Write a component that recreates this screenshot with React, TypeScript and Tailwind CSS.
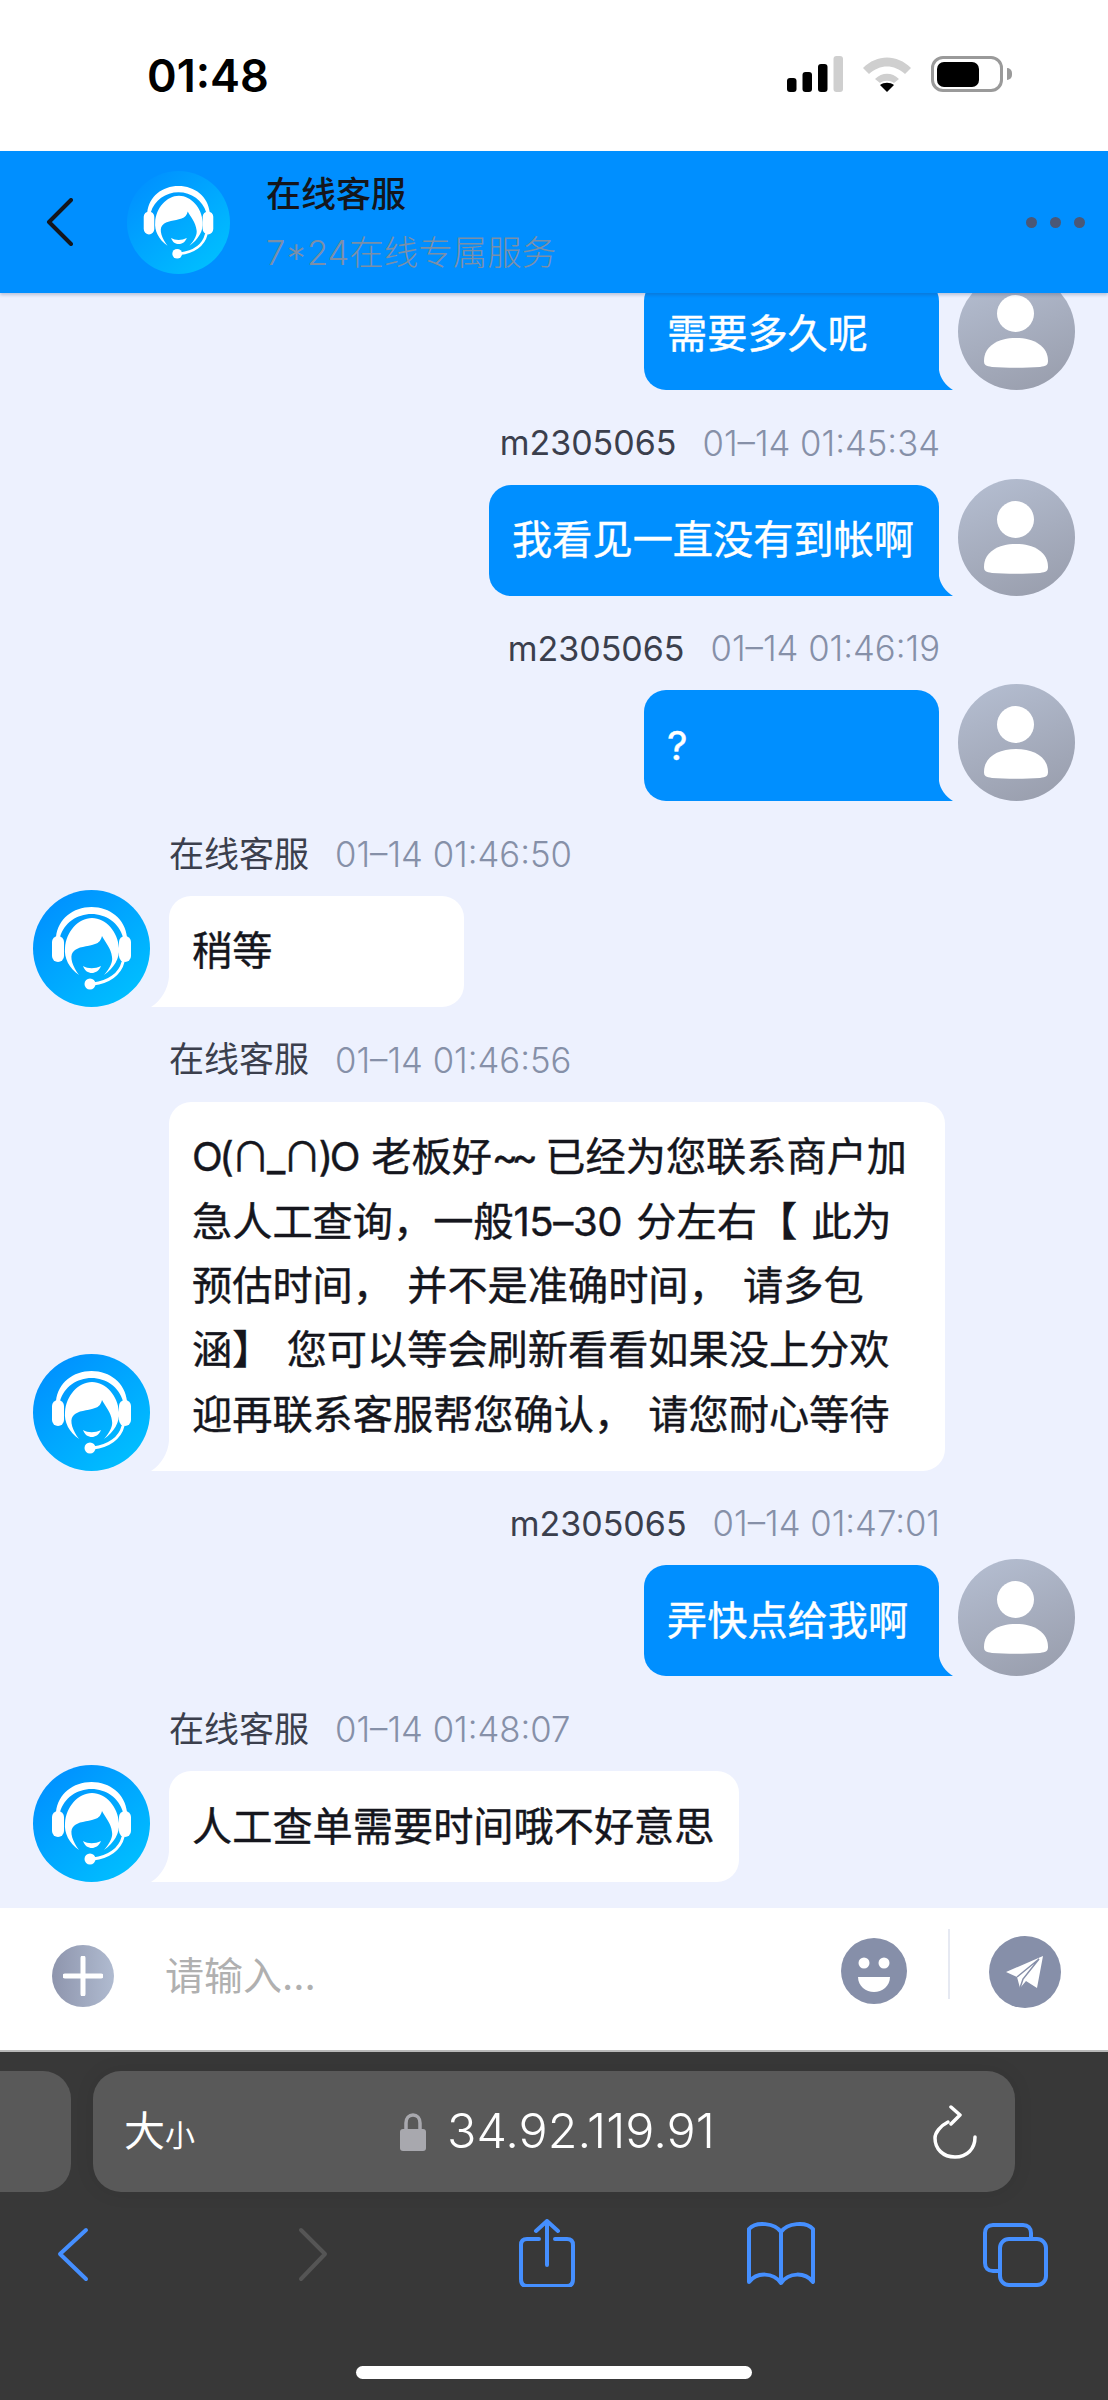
import type { ReactNode } from "react";

const cjk = "font-['Inter','Noto_Sans_CJK_SC',sans-serif]";

function AgentAvatar({ className }: { className: string }) {
  return (
    <svg viewBox="0 0 117 117" className={className}>
      <defs>
        <linearGradient id="agentBg" x1="0.15" y1="0.1" x2="0.85" y2="0.9">
          <stop offset="0" stopColor="#0092ff" />
          <stop offset="1" stopColor="#00beff" />
        </linearGradient>
      </defs>
      <circle cx="58.5" cy="58.5" r="58.5" fill="url(#agentBg)" />
      {/* headband */}
      <path d="M23 47C25 29 40 17 58.500 17C77 17 92 29 94 47L90 47C86 33 73 24 58.500 24C44 24 31 33 27 47Z" fill="#fff" />
      {/* ear cups */}
      <rect x="19" y="46" width="12" height="26" rx="6" fill="#fff" />
      <rect x="86" y="46" width="12" height="26" rx="6" fill="#fff" />
      {/* hair, the face is the notch left open */}
      <path d="M46 85C36 78 31 68 32 58C33 42 45 28 59 28C73 28 85 42 86 58C87 68 81 78 71 85C77 78 80 72 79 67C78 58 72 52 69 46C68 50 66 53 62 54C54 57 45 56 40 62C36 67 40 77 46 85Z" fill="#fff" />
      {/* smile */}
      <path d="M50 76C55 79 62 79 68 76C66 81 62 83 59 83C55 83 52 81 50 76Z" fill="#fff" />
      {/* microphone arm */}
      <path d="M90 72C87 84 76 92 60 94" fill="none" stroke="#fff" strokeWidth="3" strokeLinecap="round" />
      <circle cx="57" cy="94" r="5.500" fill="#fff" />
    </svg>
  );
}

function UserAvatar() {
  return (
    <svg viewBox="0 0 117 117" className="h-[117px] w-[117px] shrink-0">
      <defs>
        <linearGradient id="userBg" x1="0.3" y1="0" x2="0.7" y2="1">
          <stop offset="0" stopColor="#b3bccf" />
          <stop offset="1" stopColor="#9a9fae" />
        </linearGradient>
      </defs>
      <circle cx="58.5" cy="58.500" r="58.5" fill="url(#userBg)" />
      <circle cx="57.500" cy="40.500" r="18.500" fill="#fff" />
      <path d="M26 88C26 73 40 65 58 65C76 65 90 73 90 88C90 92 88 93 82 94C68 95 48 95 34 94C28 93 26 92 26 88Z" fill="#fff" />
    </svg>
  );
}

function Meta({ name, time, right }: { name: string; time: string; right?: boolean }) {
  return (
    <div className={`mb-[15px] flex h-[42px] items-center ${right ? "justify-end gap-[26px] pr-[168px]" : "gap-[26px] pl-[169px]"}`}>
      <span className={`text-[#3b3f4d] ${right ? "text-[34px]" : "text-[35px]"}`}>{name}</span>
      <span className="text-[34.700px] font-light text-[#8690a8]">{time}</span>
    </div>
  );
}

function OutMessage({ name, time, children }: { name?: string; time?: string; children: ReactNode }) {
  return (
    <div>
      {name && time && <Meta name={name} time={time} right />}
      <div className="flex items-end justify-end gap-[19px] pr-[33px]">
        <div className="relative min-w-[295px] rounded-[22px] rounded-br-none bg-[#008fff] py-[23.500px] pl-[23px] pr-[25px] text-[40.200px] leading-[64px] text-white [-webkit-text-stroke:0.4px_#fff]">
          {children}
          <svg viewBox="0 0 14 20" className="absolute bottom-0 right-[-14px] h-[20px] w-[14px]">
            <path d="M0 0C1 8 7 16 14 20L0 20Z" fill="#008fff" />
          </svg>
        </div>
        <UserAvatar />
      </div>
    </div>
  );
}

function InMessage({ time, wide, children }: { time: string; wide?: boolean; children: ReactNode }) {
  return (
    <div>
      <Meta name="在线客服" time={time} />
      <div className="flex items-end gap-[19px] pl-[33px]">
        <AgentAvatar className="h-[117px] w-[117px] shrink-0" />
        <div className={`relative rounded-[22px] rounded-bl-none bg-white py-[23.500px] pl-[23px] pr-[25px] text-[40.200px] text-[#15161d] [-webkit-text-stroke:0.4px_#15161d] ${wide ? "mt-[6px] w-[776px] whitespace-nowrap leading-[64.400px] [word-spacing:3px]" : "min-w-[295px] leading-[64px]"}`}>
          {children}
          <svg viewBox="0 0 18 30" className="absolute bottom-0 left-[-18px] h-[30px] w-[18px]">
            <path d="M18 0C17 12 10 24 0 30L18 30Z" fill="#fff" />
          </svg>
        </div>
      </div>
    </div>
  );
}

function StatusIcons() {
  return (
    <div className="flex items-center">
      <svg viewBox="0 0 56 36" className="h-[36px] w-[56px]">
        <rect x="0" y="22" width="9.500" height="14" rx="3" fill="#000" />
        <rect x="15.500" y="16" width="9.500" height="20" rx="3" fill="#000" />
        <rect x="31" y="8" width="9.500" height="28" rx="3" fill="#000" />
        <rect x="46.500" y="0" width="9.500" height="36" rx="3" fill="#cfcfcf" />
      </svg>
      <svg viewBox="0 0 48 36" className="ml-[20px] h-[36px] w-[48px]">
        <path d="M0 12C14-2 34-2 48 12L42 18C31 8 17 8 6 18Z" fill="#cfcfcf" />
        <path d="M12 23C19 16 29 16 36 23L31 27C27 24 21 24 17 27Z" fill="#cfcfcf" />
        <path d="M17 29C21 26 27 26 31 29L24 36Z" fill="#000" />
      </svg>
      <div className="ml-[20px] flex h-[36px] w-[72px] items-center rounded-[12px] border-[3px] border-[#9a9a9a] p-[3px]">
        <div className="h-[25px] w-[42px] rounded-[7px] bg-black" />
      </div>
      <div className="ml-[4px] h-[12px] w-[5px] rounded-r-full bg-[#9a9a9a]" />
    </div>
  );
}

function ChatHeader() {
  return (
    <header className="relative z-10 flex h-[142px] shrink-0 items-center bg-[#008fff] pl-[46px] pr-[23px] shadow-[0_2px_3px_rgba(40,60,110,0.25)]">
      <svg viewBox="0 0 27 48" className="h-[48px] w-[27px]">
        <path d="M25 2L3 24L25 46" fill="none" stroke="#14161c" strokeWidth="4" strokeLinecap="round" strokeLinejoin="round" />
      </svg>
      <AgentAvatar className="ml-[54px] h-[103px] w-[103px]" />
      <div className="ml-[36px] flex flex-col pt-[3px]">
        <span className="text-[35px] font-medium leading-[44px] text-[#14161c]">在线客服</span>
        <span className="mt-[15px] text-[34.500px] font-light leading-[44px] text-[#7b8fa8]">7*24在线专属服务</span>
      </div>
      <div className="ml-auto flex gap-[13px]">
        <span className="h-[11px] w-[11px] rounded-full bg-[#4a5877]" />
        <span className="h-[11px] w-[11px] rounded-full bg-[#4a5877]" />
        <span className="h-[11px] w-[11px] rounded-full bg-[#4a5877]" />
      </div>
    </header>
  );
}

function InputBar() {
  return (
    <div className="flex h-[142px] shrink-0 items-start bg-white pl-[52px] pr-[47px]">
      <div className="mt-[37px] flex h-[62px] w-[62px] items-center justify-center rounded-full bg-gradient-to-l from-[#b0bbd0] to-[#8e95ad]">
        <svg viewBox="0 0 40 40" className="h-[40px] w-[40px]">
          <path d="M20 2V38M2 20H38" stroke="#fff" strokeWidth="5" strokeLinecap="round" />
        </svg>
      </div>
      <span className="ml-[51px] mt-[39px] text-[39px] leading-[58px] text-[#b0b0b0]">请输入...</span>
      <svg viewBox="0 0 66 66" className="ml-auto mt-[30px] h-[66px] w-[66px]">
        <circle cx="33" cy="33" r="33" fill="#868fa9" />
        <circle cx="23" cy="25" r="5.500" fill="#fff" />
        <circle cx="43" cy="25" r="5.500" fill="#fff" />
        <path d="M17 39H49C49 48 41 54 33 54C25 54 17 48 17 39Z" fill="#fff" />
      </svg>
      <div className="ml-[41px] mt-[21px] h-[70px] w-[2px] bg-[#e6e9f2]" />
      <svg viewBox="0 0 72 72" className="ml-[39px] mt-[28px] h-[72px] w-[72px]">
        <circle cx="36" cy="36" r="36" fill="#868fa9" />
        <path d="M54 20L17 36L28 41L31 52L37 45L48 52Z" fill="#fff" />
        <path d="M28 41L50 23L34 43L31 52" fill="none" stroke="#868fa9" strokeWidth="1.500" />
      </svg>
    </div>
  );
}

function BrowserChrome() {
  const blue = "#458fff";
  return (
    <div className="flex h-[350px] shrink-0 flex-col border-t-2 border-[#b8b8b8] bg-[#383838]">
      <div className="mt-[19px] flex h-[121px] items-stretch gap-[22px]">
        <div className="w-[71px] rounded-r-[28px] bg-[#595959]" />
        <div className="flex w-[922px] items-center rounded-[28px] bg-[#595959] pl-[31px] pr-[38px] shadow-[0_0_20px_rgba(0,0,0,0.08)]">
          <span className="flex w-[276px] items-baseline text-white">
            <span className="text-[41px]">大</span>
            <span className="text-[30px]">小</span>
          </span>
          <svg viewBox="0 0 26 38" className="h-[38px] w-[26px]">
            <path d="M6 17V10C6 5 9 2 13 2C17 2 20 5 20 10V17" fill="none" stroke="#a8a8ae" strokeWidth="3.500" />
            <rect x="0" y="16" width="26" height="22" rx="3" fill="#a8a8ae" />
          </svg>
          <span className="ml-[21px] text-[48.500px] font-light leading-none text-white">34.92.119.91</span>
          <svg viewBox="0 0 44 54" className="ml-auto h-[54px] w-[44px]">
            <path d="M15 17C7 21 2 28 2 33C2 44 10 52 22 52C34 52 42 44 42 32" fill="none" stroke="#fff" strokeWidth="3.500" strokeLinecap="round" />
            <path d="M18 2L27 10L18 19" fill="none" stroke="#fff" strokeWidth="3.500" strokeLinecap="round" strokeLinejoin="round" />
          </svg>
        </div>
      </div>
      <div className="mt-[26px] flex h-[69px] items-center justify-between pl-[38px] pr-[59px]">
        <svg viewBox="0 0 68 68" className="h-[68px] w-[68px]">
          <path d="M48 11L22 35L48 60" fill="none" stroke={blue} strokeWidth="4" strokeLinecap="round" strokeLinejoin="round" />
        </svg>
        <svg viewBox="0 0 68 68" className="h-[68px] w-[68px]">
          <path d="M27 11L51 35L27 60" fill="none" stroke="#555" strokeWidth="4" strokeLinecap="round" strokeLinejoin="round" />
        </svg>
        <svg viewBox="0 0 68 68" className="h-[68px] w-[68px]">
          <path d="M29 20H17C13 20 11 22 11 26V60C11 65 13 67 17 67H57C61 67 63 65 63 60V26C63 22 61 20 57 20H45M37 46V2M26 12L37 2L48 12" fill="none" stroke={blue} strokeWidth="4" strokeLinecap="round" strokeLinejoin="round" />
        </svg>
        <svg viewBox="0 0 68 68" className="h-[68px] w-[68px] overflow-visible">
          <path d="M36 13C30 4 11 2 4 10V63C12 53 28 53 36 64C44 53 60 53 68 63V10C61 2 42 4 36 13V64" fill="none" stroke={blue} strokeWidth="4" strokeLinecap="round" strokeLinejoin="round" />
        </svg>
        <svg viewBox="0 0 68 68" className="h-[68px] w-[68px]">
          <path d="M19 52H12C7 52 4 49 4 44V14C4 9 7 6 12 6H42C47 6 50 9 50 14V20" fill="none" stroke={blue} strokeWidth="4" />
          <rect x="19" y="20" width="46" height="46" rx="9" fill="none" stroke={blue} strokeWidth="4" />
        </svg>
      </div>
      <div className="mt-auto mb-[21px] h-[13px] w-[396px] self-center rounded-full bg-white" />
    </div>
  );
}

export default function App() {
  return (
    <div className={`flex h-[2400px] w-[1108px] flex-col overflow-hidden bg-white ${cjk}`}>
      <div className="flex h-[151px] shrink-0 items-start justify-between pl-[147px] pr-[96px] pt-[56px]">
        <span className="mt-[1px] text-[45px] font-semibold leading-[37px] text-black">01:48</span>
        <StatusIcons />
      </div>
      <ChatHeader />
      <main className="flex min-h-0 flex-1 flex-col justify-end gap-[31.700px] overflow-hidden bg-[#edf1fe] pb-[26px]">
        <OutMessage>需要多久呢</OutMessage>
        <OutMessage name="m2305065" time="01–14 01:45:34">我看见一直没有到帐啊</OutMessage>
        <OutMessage name="m2305065" time="01–14 01:46:19">?</OutMessage>
        <InMessage time="01–14 01:46:50">稍等</InMessage>
        <InMessage time="01–14 01:46:56" wide>
          <span className="tracking-[-3.500px]">O(∩_∩)O</span> 老板好<span className="tracking-[-7px]">~~</span> 已经为您联系商户加<br />
          急人工查询，一般<span className="tracking-[-0.500px]">15–30</span> 分左右【 此为<br />
          预估时间， 并不是准确时间， 请多包<br />
          涵】 您可以等会刷新看看如果没上分欢<br />
          迎再联系客服帮您确认， 请您耐心等待
        </InMessage>
        <OutMessage name="m2305065" time="01–14 01:47:01">弄快点给我啊</OutMessage>
        <InMessage time="01–14 01:48:07">人工查单需要时间哦不好意思</InMessage>
      </main>
      <InputBar />
      <BrowserChrome />
    </div>
  );
}
